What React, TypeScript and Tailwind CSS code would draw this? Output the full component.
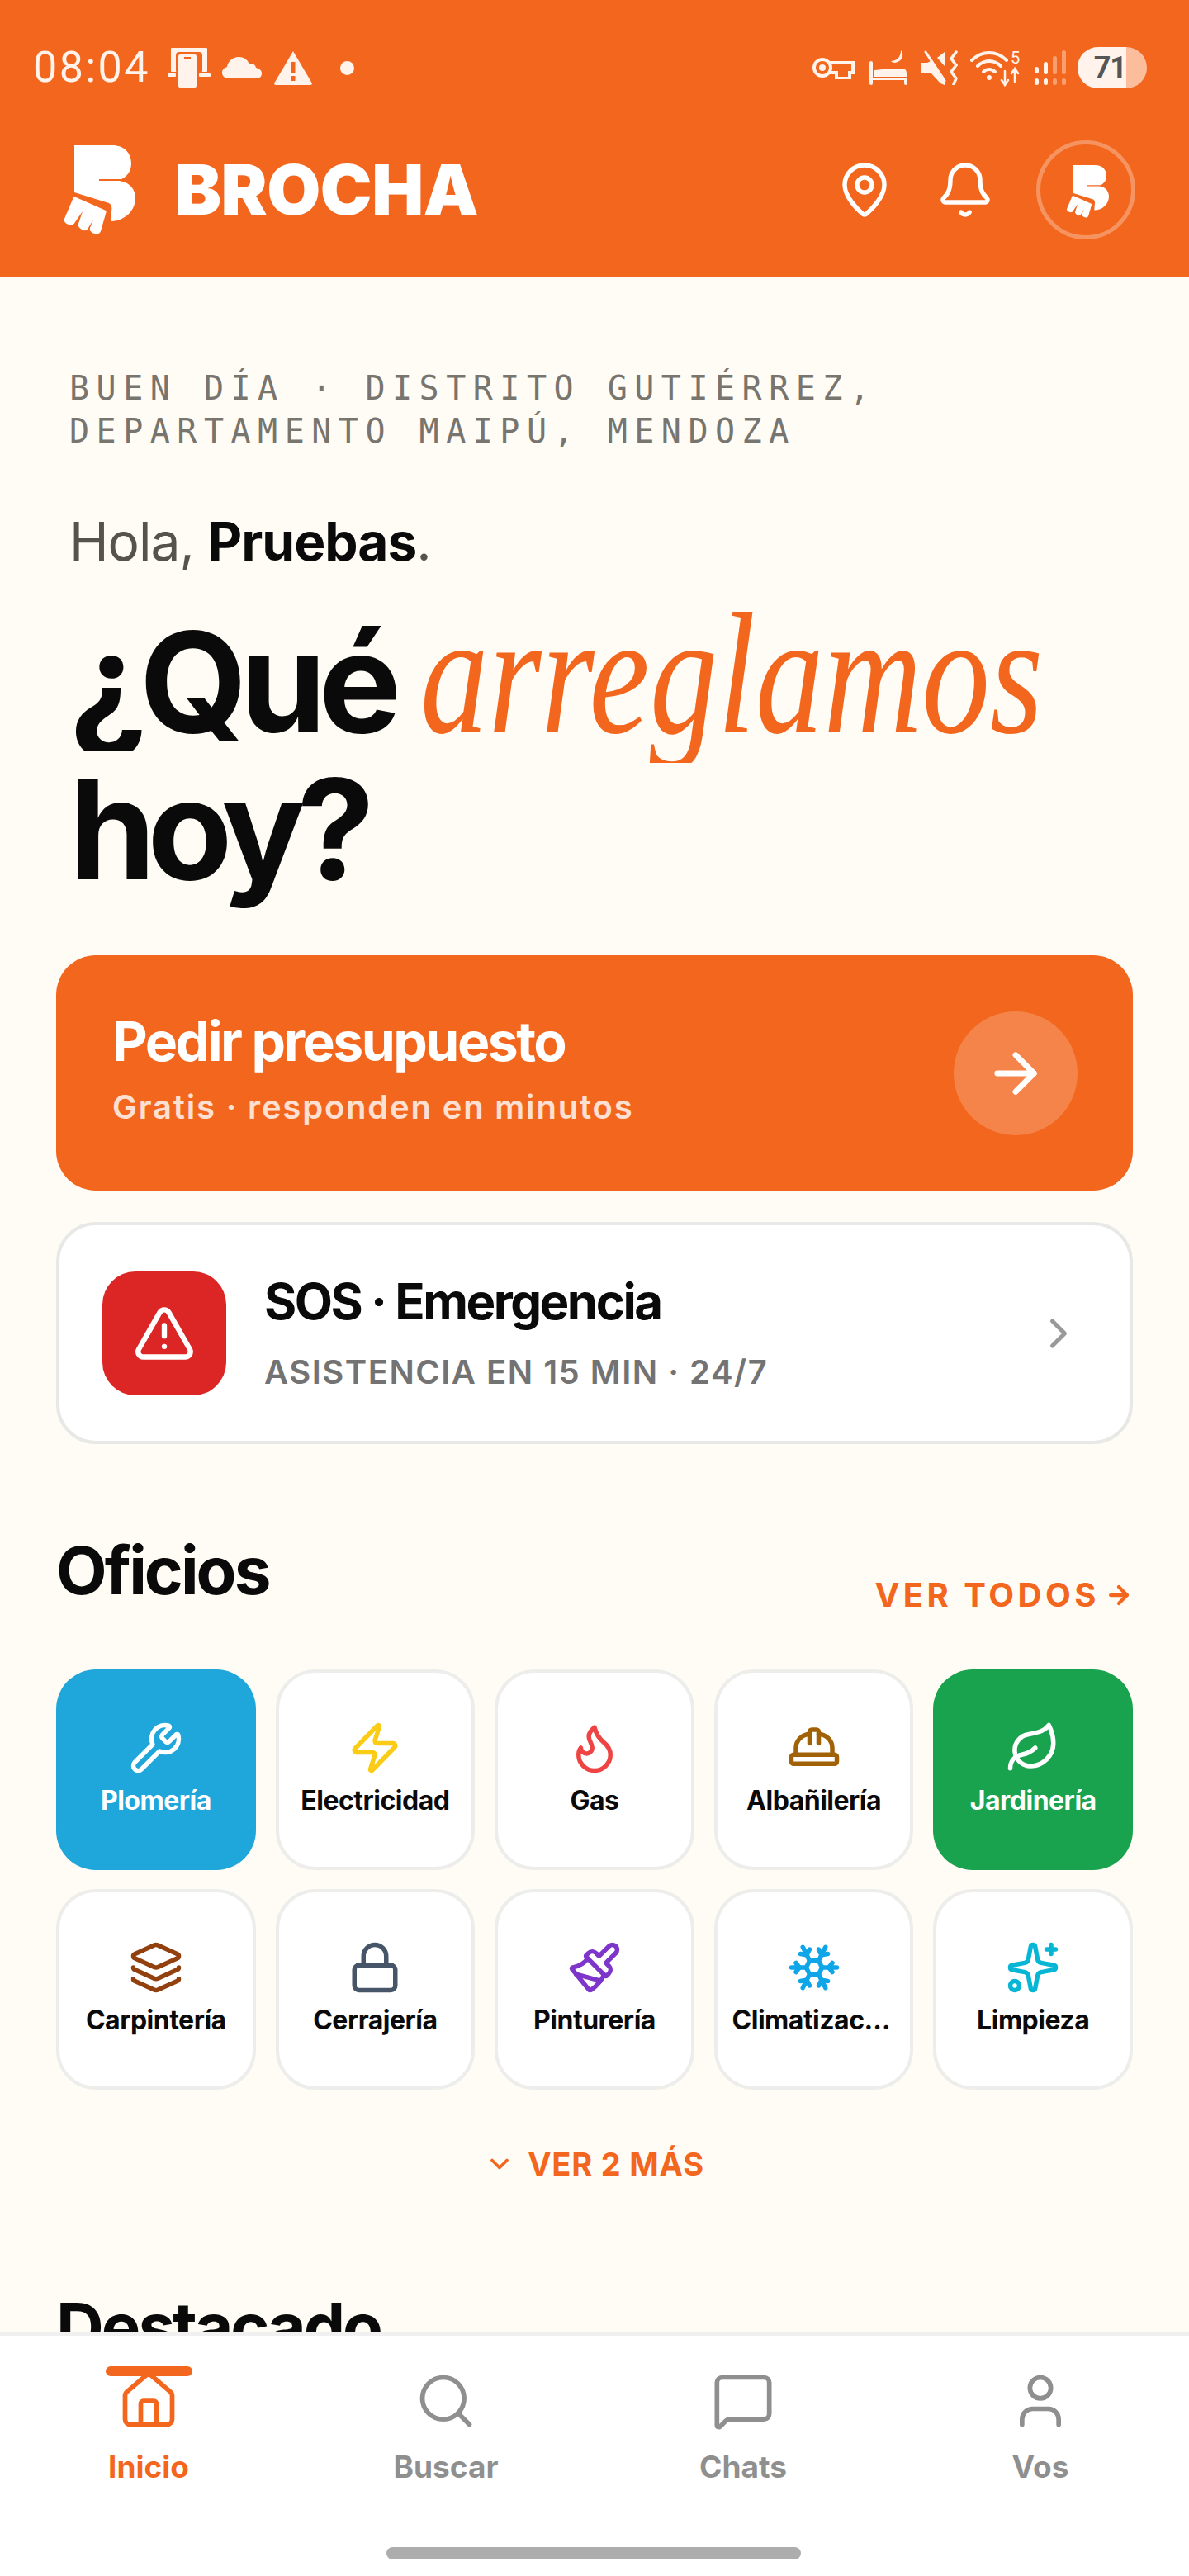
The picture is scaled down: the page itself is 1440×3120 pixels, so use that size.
import {
  ArrowRight,
  Bell,
  ChevronDown,
  ChevronRight,
  Flame,
  HardHat,
  House,
  Layers,
  Leaf,
  Lock,
  MapPin,
  MessageSquare,
  Paintbrush,
  Search,
  Snowflake,
  Sparkles,
  TriangleAlert,
  User,
  Wrench,
  Zap,
  type LucideIcon,
} from "lucide-react";

const sans = "font-['Inter','Noto_Sans',sans-serif]";

type Trade = {
  label: string;
  icon: LucideIcon;
  color: string;
  bg?: string;
};

const trades: Trade[] = [
  { label: "Plomería", icon: Wrench, color: "text-white", bg: "bg-[#1FA6DA]" },
  { label: "Electricidad", icon: Zap, color: "text-[#FACC15]" },
  { label: "Gas", icon: Flame, color: "text-[#EF4444]" },
  { label: "Albañilería", icon: HardHat, color: "text-[#A16207]" },
  { label: "Jardinería", icon: Leaf, color: "text-white", bg: "bg-[#1AA34E]" },
  { label: "Carpintería", icon: Layers, color: "text-[#92400E]" },
  { label: "Cerrajería", icon: Lock, color: "text-[#475569]" },
  { label: "Pinturería", icon: Paintbrush, color: "text-[#7E35C9]" },
  { label: "Climatización", icon: Snowflake, color: "text-[#0EA5E9]" },
  { label: "Limpieza", icon: Sparkles, color: "text-[#06B6D4]" },
];

const tabs: { label: string; icon: LucideIcon; active?: boolean }[] = [
  { label: "Inicio", icon: House, active: true },
  { label: "Buscar", icon: Search },
  { label: "Chats", icon: MessageSquare },
  { label: "Vos", icon: User },
];

function BrochaLogo({ className }: { className: string }) {
  return (
    <svg viewBox="0 0 88 108" className={className} fill="currentColor">
      <path d="M14 0H60C74 0 83 9 83 22C83 31 78 38 71 41H44V43H66C79 43 88 52 88 64C88 79 75 92 58 92L59 80C60 75 59 72 56 70L14 57Z" />
      <path d="M13 63C14 62 15 62 16 63L50 78C53 79 53 81 52 83L46 104C45 107 42 108 39 107C35 106 32 104 33 100L37 90L31 100C29 104 26 104 23 102C20 100 18 98 19 95L24 80L15 93C13 97 10 97 7 96C3 95 1 92 2 89Z" />
    </svg>
  );
}

function StatusBar() {
  return (
    <div className="flex h-[50px] items-center justify-between pl-[40px] pr-[51px] text-[#FFF3EC]">
      <div className="flex items-center">
        <span className="w-[163px] font-['Roboto',sans-serif] text-[52px] leading-[50px] tracking-[2.5px]">08:04</span>
        {/* phone in tray */}
        <svg viewBox="0 0 52 48" className="h-[48px] w-[52px]" fill="currentColor">
          <rect x="4" y="0" width="44" height="29" rx="1" />
          <rect x="10" y="5" width="32" height="26" rx="4" fill="#F3661D" />
          <rect x="13" y="8" width="22" height="40" rx="2" />
          <rect x="0" y="31" width="10" height="4" rx="1" />
          <rect x="38" y="31" width="14" height="4" rx="1" />
          <rect x="20" y="11" width="8" height="2" fill="#F3661D" />
        </svg>
        <svg viewBox="0 0 48 26" className="ml-[14px] h-[26px] w-[48px]" fill="currentColor">
          <path d="M8 26C3 26 0 23 0 19C0 15 3 13 6 12C7 5 13 0 20 0C26 0 31 3 33 9C35 7 40 8 41 13C45 14 48 16 48 20C48 24 45 26 42 26Z" />
        </svg>
        <svg viewBox="0 0 46 41" className="ml-[15px] h-[41px] w-[46px]">
          <path d="M23 0L46 39Q46 41 44 41H2Q0 41 0 39Z" fill="currentColor" />
          <rect x="20.500" y="13" width="5" height="13" fill="#F3661D" />
          <rect x="20.500" y="30" width="5" height="6" fill="#F3661D" />
        </svg>
        <span className="ml-[34px] size-[17px] rounded-full bg-[#FFF3EC]" />
      </div>
      <div className="flex items-center">
        {/* key */}
        <svg viewBox="0 0 52 28" className="h-[28px] w-[52px]" fill="none" stroke="currentColor" strokeWidth="4">
          <circle cx="13" cy="14" r="10" />
          <circle cx="13" cy="14" r="2" fill="currentColor" />
          <path d="M22 8H50V20H46V27H30V20H22" />
        </svg>
        {/* bed and moon */}
        <svg viewBox="0 0 46 42" className="ml-[18px] h-[42px] w-[46px]" fill="currentColor">
          <rect x="0" y="13" width="4" height="29" rx="2" />
          <path d="M6 24L26 22H40Q45 22 45 28V32H6Z" />
          <rect x="4" y="33" width="42" height="3" />
          <rect x="42" y="34" width="4" height="8" rx="2" />
          <path d="M38 0C42 4 41 13 31 15C29 15 27 14 26 13C33 13 38 8 38 0Z" />
        </svg>
        {/* muted vibrate */}
        <svg viewBox="0 0 46 42" className="ml-[16px] h-[42px] w-[46px]">
          <path d="M0 15H8L14 12L29 34V42L24 40L12 27H0Z" fill="currentColor" />
          <path d="M29 2V19L20 9Z" fill="currentColor" />
          <path d="M6 2L29 37" stroke="currentColor" strokeWidth="3" strokeLinecap="round" />
          <path d="M43 2L37 10L43 18L37 26L43 34L40 41" fill="none" stroke="currentColor" strokeWidth="3.500" strokeLinecap="round" />
        </svg>
        {/* wifi */}
        <svg viewBox="0 0 64 45" className="ml-[14px] h-[45px] w-[64px]" fill="none" stroke="currentColor">
          <path d="M2 13C14 1 32 1 44 13" strokeWidth="4" strokeLinecap="round" />
          <path d="M9 20C17 12 29 12 37 20" strokeWidth="4" strokeLinecap="round" />
          <path d="M16 27C20 23 26 23 30 27" strokeWidth="4" strokeLinecap="round" />
          <circle cx="23" cy="34" r="3" fill="currentColor" stroke="none" />
          <text x="49" y="17" fontSize="20" fill="currentColor" stroke="none" fontFamily="Roboto, sans-serif">5</text>
          <path d="M42 26V42M38 37L42 43L46 37M54 39V23M50 29L54 23L58 29" strokeWidth="2.500" strokeLinecap="round" />
        </svg>
        {/* signal */}
        <svg viewBox="0 0 39 42" className="ml-[14px] h-[42px] w-[39px]">
          <rect x="0" y="20" width="5" height="8" rx="2.500" fill="currentColor" />
          <rect x="0" y="34" width="5" height="8" rx="2.500" fill="currentColor" />
          <rect x="11" y="14" width="5" height="15" rx="2.500" fill="currentColor" />
          <rect x="11" y="34" width="5" height="8" rx="2.500" fill="currentColor" />
          <rect x="22" y="7" width="5" height="22" rx="2.500" fill="#FFF3EC" fillOpacity="0.4" />
          <rect x="22" y="34" width="5" height="8" rx="2.500" fill="#FFF3EC" fillOpacity="0.4" />
          <rect x="33" y="0" width="5" height="29" rx="2.500" fill="#FFF3EC" fillOpacity="0.4" />
          <rect x="33" y="34" width="5" height="8" rx="2.500" fill="#FFF3EC" fillOpacity="0.4" />
        </svg>
        {/* battery */}
        <div className="ml-[13px] h-[50px] w-[84px] overflow-hidden rounded-full bg-[#FBBD9B]">
          <div className="flex h-full w-[59px] items-center justify-end bg-[#FFF3EC] font-['Roboto',sans-serif] text-[36px] font-bold tracking-[-1px] text-[#555555]">
            71
          </div>
        </div>
      </div>
    </div>
  );
}

function Header() {
  return (
    <header className="h-[335px] shrink-0 bg-[#F3661D] pt-[57px]">
      <StatusBar />
      <div className="mt-[63px] flex h-[120px] items-center justify-between pl-[76px] pr-[65px] text-white">
        <div className="flex items-center">
          <BrochaLogo className="h-[108px] w-[88px]" />
          <span className={`ml-[48px] ${sans} text-[84px] leading-none font-black tracking-[-0.5px]`}>BROCHA</span>
        </div>
        <div className="flex items-center">
          <MapPin className="size-[72px]" strokeWidth={1.8} />
          <Bell className="ml-[50px] size-[72px]" strokeWidth={1.8} />
          <div className="ml-[50px] flex size-[120px] items-center justify-center rounded-full border-[5px] border-white/30">
            <BrochaLogo className="ml-[4px] mt-[4px] h-[64px] w-[52px]" />
          </div>
        </div>
      </div>
    </header>
  );
}

function Greeting() {
  return (
    <section>
      <p className="pl-[16px] font-['DejaVu_Sans_Mono',monospace] text-[40px] leading-[52px] tracking-[8.5px] text-[#78756E]">
        BUEN DÍA · DISTRITO GUTIÉRREZ,
        <br />
        DEPARTAMENTO MAIPÚ, MENDOZA
      </p>
      <p className={`mt-[68px] pl-[16px] ${sans} text-[64px] leading-[80px] tracking-[-1px] text-[#55534E]`}>
        Hola, <span className="font-bold text-[#0A0A0A]">Pruebas</span>.
      </p>
      <h1 className={`mt-[31px] pl-[16px] ${sans} text-[168px] font-bold text-[#0A0A0A]`}>
        <div className="flex h-[179px] items-baseline whitespace-nowrap">
          <span className="block leading-[179px] tracking-[-9px] [clip-path:inset(-40px_-40px_6px_-40px)]">¿Qué</span>
          <span className="ml-[32px] block origin-left scale-x-[0.785] font-['Liberation_Serif',serif] text-[210px] leading-[179px] font-normal text-[#F3661D] italic [clip-path:inset(-60px_-60px_-18px_-60px)]">
            arreglamos
          </span>
        </div>
        <div className="h-[188px] pt-[9px] leading-[179px] tracking-[-10px]">hoy?</div>
      </h1>
    </section>
  );
}

function Actions() {
  return (
    <section>
      <div className="mt-[63px] flex h-[285px] items-center justify-between rounded-[48px] bg-[#F3661D] pl-[68px] pr-[67px] text-white">
        <div className={`pb-[10px] ${sans}`}>
          <p className="text-[66px] leading-[72px] font-bold tracking-[-2.500px]">Pedir presupuesto</p>
          <p className="mt-[20px] text-[40px] leading-[48px] font-semibold tracking-[1.800px] text-white/80">Gratis · responden en minutos</p>
        </div>
        <div className="flex size-[150px] items-center justify-center rounded-full bg-white/20">
          <ArrowRight className="size-[76px]" strokeWidth={2.2} />
        </div>
      </div>
      <div className="mt-[38px] flex h-[269px] items-center rounded-[48px] border-[4px] border-[#E8E8E6] bg-white pl-[52px] pr-[56px]">
        <div className="flex size-[150px] shrink-0 items-center justify-center rounded-[40px] bg-[#DC2626] text-white">
          <TriangleAlert className="size-[76px]" strokeWidth={2} />
        </div>
        <div className={`ml-[46px] flex-1 pb-[2px] ${sans}`}>
          <p className="text-[60px] leading-[68px] font-bold tracking-[-2.500px] text-[#0A0A0A]">SOS · Emergencia</p>
          <p className="mt-[28px] text-[40px] leading-[48px] font-semibold tracking-[1.500px] text-[#737373]">ASISTENCIA EN 15 MIN · 24/7</p>
        </div>
        <ChevronRight className="size-[60px] text-[#999999]" strokeWidth={2} />
      </div>
    </section>
  );
}

function Trades() {
  return (
    <section className="mt-[107px]">
      <div className={`flex h-[100px] items-end justify-between ${sans}`}>
        <h2 className="mb-[6px] text-[80px] leading-[96px] font-bold tracking-[-3px] text-[#0A0A0A]">Oficios</h2>
        <span className="flex items-center text-[40px] leading-[48px] font-bold tracking-[4.500px] text-[#F3661D]">
          VER TODOS
          <ArrowRight className="ml-[6px] size-[34px]" strokeWidth={3} />
        </span>
      </div>
      <div className="mt-[66px] grid grid-cols-5 gap-x-[24px] gap-y-[23px]">
        {trades.map((t) => (
          <div
            key={t.label}
            className={`flex h-[243px] flex-col items-center rounded-[48px] pt-[62px] ${t.bg ?? "border-[4px] border-[#EDEDEB] bg-white"}`}
          >
            <t.icon className={`size-[66px] shrink-0 ${t.bg ? "" : "-mt-[4px]"} ${t.color}`} strokeWidth={2} />
            <span
              className={`mt-[11px] w-[198px] truncate text-center ${sans} text-[32px] leading-[40px] font-bold tracking-[-0.5px] ${t.bg ? "text-white" : "text-[#0A0A0A]"}`}
            >
              {t.label}
            </span>
          </div>
        ))}
      </div>
      <div className={`mt-[66px] flex h-[48px] items-center justify-center ${sans} text-[38px] font-bold tracking-[0.8px] text-[#F3661D]`}>
        <ChevronDown className="mr-[16px] size-[36px]" strokeWidth={2.5} />
        VER 2 MÁS
      </div>
      <h2 className={`mt-[125px] ${sans} text-[80px] leading-[96px] font-bold tracking-[-3px] text-[#0A0A0A]`}>Destacado</h2>
    </section>
  );
}

function TabBar() {
  return (
    <nav className="relative h-[296px] shrink-0 border-t-[5px] border-[#F0F0F0] bg-white">
      <div className="grid grid-cols-4 pt-[37px]">
        {tabs.map((t) => (
          <div key={t.label} className={`relative flex flex-col items-center ${t.active ? "text-[#F3661D]" : "text-[#8F8F8F]"}`}>
            {t.active && <span className="absolute top-0 h-[12px] w-[105px] rounded-full bg-[#F3661D]" />}
            <t.icon className="mt-[4px] size-[76px]" strokeWidth={1.8} />
            <span className={`mt-[20px] ${sans} text-[37px] leading-[44px] font-bold`}>{t.label}</span>
          </div>
        ))}
      </div>
      <div className="absolute bottom-[20px] left-[468px] h-[15px] w-[502px] rounded-full bg-[#ADADAD]" />
    </nav>
  );
}

export default function App() {
  return (
    <div className="flex h-[3120px] w-[1440px] flex-col overflow-hidden bg-[#FFFCF5]">
      <Header />
      <main className="min-h-0 flex-1 overflow-hidden px-[68px] pt-[109px]">
        <Greeting />
        <Actions />
        <Trades />
      </main>
      <TabBar />
    </div>
  );
}
